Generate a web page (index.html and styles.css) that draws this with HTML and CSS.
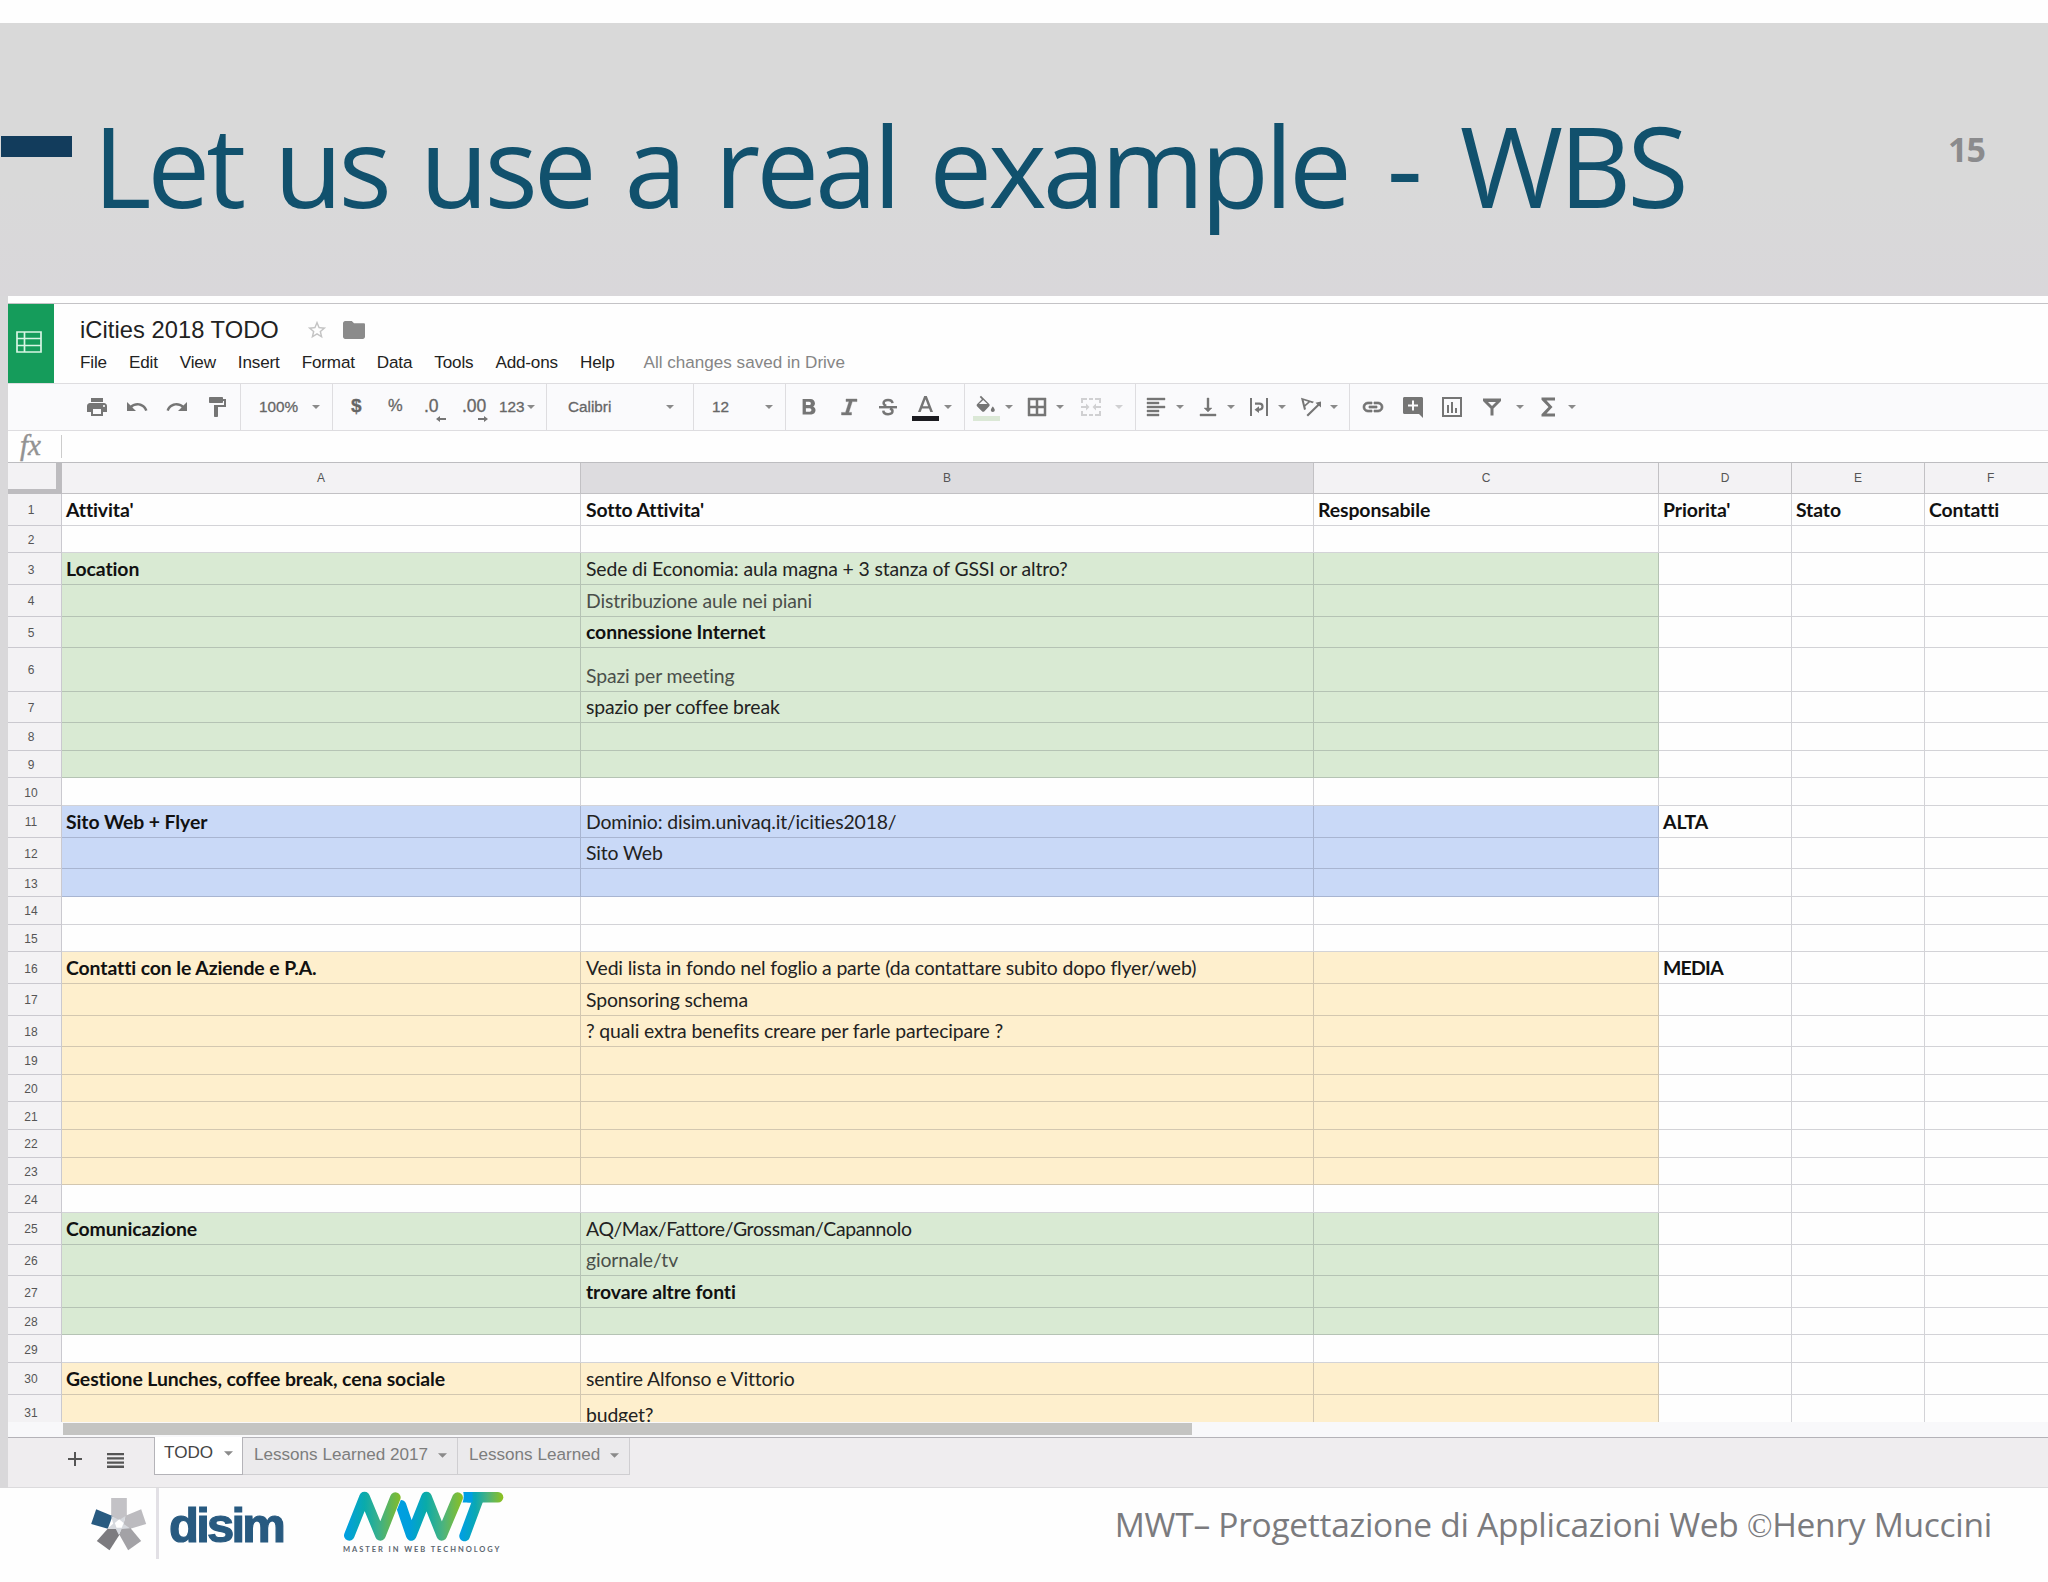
FILE: index.html
```html
<!DOCTYPE html>
<html lang="it">
<head>
<meta charset="utf-8">
<title>Let us use a real example - WBS</title>
<link rel="stylesheet" href="styles.css">
</head>
<body>
<svg width="0" height="0" class="defs">
  <symbol id="arr" viewBox="0 0 8 4"><path d="M0 0h8L4 4z"/></symbol>
</svg>
<main class="slide">
  <header class="head">
    <span class="dash"></span>
    <h1>Let us use a real example <span>-</span> WBS</h1>
    <span class="page">15</span>
  </header>

  <section class="sheet">
    <div class="top">
      <div class="logo"><svg viewBox="0 0 26 22" width="26" height="22"><path d="M1 1h24v20H1zM1 7.5h24M1 14.5h24M8.5 1v20" fill="none" stroke="#d8f5e4" stroke-width="1.7"/></svg></div>
      <div class="titles">
        <div class="name"><span>iCities 2018 TODO</span>
          <svg class="star" viewBox="0 0 24 24" width="22" height="22"><path d="M22 9.24l-7.19-.62L12 2 9.19 8.63 2 9.24l5.46 4.73L5.82 21 12 17.27 18.18 21l-1.63-7.03L22 9.24zM12 15.4l-3.76 2.27 1-4.28-3.32-2.88 4.38-.38L12 6.1l1.71 4.04 4.38.38-3.32 2.88 1 4.28L12 15.4z" fill="#c4c4c4"/></svg>
          <svg viewBox="2 4 20 16" width="22" height="18" preserveAspectRatio="none"><path d="M10 4H4c-1.100 0-2 .9-2 2v12c0 1.100.9 2 2 2h16c1.100 0 2-.9 2-2V7c0-.6-.5-1-1-1h-9l-2-2z" fill="#8b8b8b"/></svg>
        </div>
        <nav class="menu"><span>File</span><span>Edit</span><span>View</span><span>Insert</span><span>Format</span><span>Data</span><span>Tools</span><span>Add-ons</span><span>Help</span><span class="saved">All changes saved in Drive</span></nav>
      </div>
    </div>

    <div class="tools">
      <svg class="ic" viewBox="0 0 24 24"><path d="M19 8H5c-1.660 0-3 1.340-3 3v6h4v4h12v-4h4v-6c0-1.660-1.340-3-3-3zm-3 11H8v-5h8v5zm3-7c-.55 0-1-.45-1-1s.45-1 1-1 1 .45 1 1-.45 1-1 1zm-1-9H6v4h12V3z"/></svg>
      <svg class="ic" viewBox="0 0 24 24"><path d="M12.500 8c-2.650 0-5.050.99-6.900 2.600L2 7v9h9l-3.620-3.620c1.390-1.160 3.160-1.880 5.120-1.880 3.540 0 6.550 2.310 7.600 5.500l2.370-.78C21.080 11.030 17.150 8 12.500 8z"/></svg>
      <svg class="ic" viewBox="0 0 24 24"><path d="M18.400 10.600C16.550 8.990 14.150 8 11.500 8c-4.650 0-8.580 3.030-9.960 7.220L3.900 16c1.050-3.190 4.050-5.500 7.600-5.500 1.950 0 3.730.72 5.120 1.880L13 16h9V7l-3.600 3.600z"/></svg>
      <svg class="ic" viewBox="0 0 24 24"><path d="M18 4V3c0-.55-.45-1-1-1H5c-.55 0-1 .45-1 1v4c0 .55.45 1 1 1h12c.55 0 1-.45 1-1V6h1v4H9v11c0 .55.45 1 1 1h2c.55 0 1-.45 1-1v-9h8V4h-3z"/></svg>
      <b class="sep"></b>
      <span>100%</span><svg class="ar"><use href="#arr"/></svg>
      <b class="sep"></b>
      <span class="big">$</span><span class="pct">%</span>
      <span class="dec">.0<svg viewBox="0 0 10 6" width="10" height="6"><path d="M0 3l4-3v2h6v2H4v2z"/></svg></span>
      <span class="dec">.00<svg viewBox="0 0 10 6" width="10" height="6"><path d="M10 3L6 0v2H0v2h6v2z"/></svg></span>
      <span class="num">123</span><svg class="ar"><use href="#arr"/></svg>
      <b class="sep"></b>
      <span>Calibri</span><svg class="ar"><use href="#arr"/></svg>
      <b class="sep"></b>
      <span>12</span><svg class="ar"><use href="#arr"/></svg>
      <b class="sep"></b>
      <svg class="ic" viewBox="0 0 24 24"><path d="M15.600 11.790c.97-.67 1.650-1.770 1.650-2.790 0-2.260-1.750-4-4-4H6v14h8.040c2.090 0 3.710-1.700 3.710-3.790 0-1.520-.86-2.820-2.150-3.420zM9 7.500h3c.83 0 1.500.67 1.500 1.500s-.67 1.500-1.500 1.500H9v-3zm3.500 9H9v-3h3.500c.83 0 1.500.67 1.500 1.500s-.67 1.500-1.500 1.500z" transform="translate(-1 -1.500) scale(1.100)"/></svg>
      <svg class="ic" viewBox="0 0 24 24"><path d="M9 4v2.600h3L8.500 17.400H4.500V20h10v-2.600h-2.700L15.300 6.600H20V4z" stroke="#757575" stroke-width=".4"/></svg>
      <svg class="ic" viewBox="0 0 24 24"><path d="M16.500 8.200C16.300 6 14.500 4.900 12 4.900c-2.600 0-4.400 1.200-4.400 3.100 0 1.200.8 2.200 2.600 3M14 13.500c1.700.6 2.500 1.400 2.500 2.600 0 1.900-1.900 3.100-4.400 3.100-2.800 0-4.700-1.300-4.800-3.600" fill="none" stroke="#757575" stroke-width="2.500"/><path d="M3 11h18v2.400H3z"/></svg>
      <svg class="fc" viewBox="0 0 27 28"><path d="M12.200 1L6 17h2.700l1.300-3.500h7l1.300 3.500H21L14.800 1zM10.900 11.200l2.600-7 2.600 7z"/><path d="M0 21h27v5H0z" fill="#1b1b20"/></svg><svg class="ar"><use href="#arr"/></svg>
      <b class="sep"></b>
      <svg class="fc" viewBox="0 0 27 28"><path d="M16.200 8.900L8 .8 6.700 2.100l2.200 2.200L4 9.200c-.5.600-.5 1.400 0 2l5.200 5.200c.3.300.7.400 1 .4s.7-.1 1-.4l5-5.200c.600-.6.600-1.600 0-2.300zM6 9L10.200 4.900 14.400 9zM19.800 11.500s-2 2.200-2 3.500c0 1.100.9 2 2 2s2-.9 2-2c0-1.300-2-3.500-2-3.500z"/><path d="M0 21h27v5H0z" fill="#dbe8d6"/></svg><svg class="ar"><use href="#arr"/></svg>
      <svg class="ic" viewBox="0 0 24 24"><path d="M3 3v18h18V3H3zm8 16H5v-6h6v6zm0-8H5V5h6v6zm8 8h-6v-6h6v6zm0-8h-6V5h6v6z" stroke="#757575" stroke-width=".5"/></svg><svg class="ar"><use href="#arr"/></svg>
      <svg class="ic faint" viewBox="0 0 24 24"><path d="M2 3h6v2H4v3H2zM10 3h4v2h-4zM16 3h6v5h-2V5h-4zM2 16h2v3h4v2H2zM10 19h4v2h-4zM20 16h2v5h-6v-2h4zM2 11h5V8.500l3.500 3.500L7 15.500V13H2zM22 11h-5V8.500L13.500 12l3.500 3.500V13h5z"/></svg><svg class="ar faint"><use href="#arr"/></svg>
      <b class="sep"></b>
      <svg class="ic" viewBox="0 0 24 24"><path d="M15 15H3v2h12v-2zm0-8H3v2h12V7zM3 13h18v-2H3v2zm0 8h12v-2H3v2zM3 3v2h18V3H3z" stroke="#757575" stroke-width=".4"/></svg><svg class="ar"><use href="#arr"/></svg>
      <svg class="ic" viewBox="0 0 24 24"><path d="M16 13h-3V3h-2v10H8l4 4 4-4zM4 19v2h16v-2H4z" stroke="#757575" stroke-width=".4"/></svg><svg class="ar"><use href="#arr"/></svg>
      <svg class="ic" viewBox="0 0 24 24"><path d="M3 3h2v18H3zM19 3h2v18h-2zM8 7.500h4.500a4 4 0 0 1 0 8.200H12V18l-4.500-3.300L12 11.300v2.200h.5a1.900 1.900 0 0 0 0-3.800H8z"/></svg><svg class="ar"><use href="#arr"/></svg>
      <svg class="ic" viewBox="0 0 24 24"><path d="M2 2.800l3 12.200 2-.8-.7-2.700 4.700-4.200 2.400 1 1.600-1.500zM4.700 5.300l4.500 1.500-3.400 2.900z" fill-rule="evenodd"/><path d="M7.500 20L18.300 9.400 16.500 7.700 22 6.500v6l-2-1.700L9 21.500z"/></svg><svg class="ar"><use href="#arr"/></svg>
      <b class="sep"></b>
      <svg class="ic" viewBox="0 0 24 24"><path d="M3.900 12c0-1.710 1.390-3.100 3.100-3.100h4V7H7c-2.760 0-5 2.240-5 5s2.240 5 5 5h4v-1.900H7c-1.710 0-3.100-1.390-3.100-3.100zM8 13h8v-2H8v2zm9-6h-4v1.900h4c1.710 0 3.100 1.390 3.100 3.100s-1.390 3.100-3.100 3.100h-4V17h4c2.760 0 5-2.240 5-5s-2.240-5-5-5z" stroke="#757575" stroke-width=".7"/></svg>
      <svg class="ic" viewBox="0 0 24 24"><path d="M22 3.500c0-.9-.6-1.500-1.500-1.500h-17C2.600 2 2 2.600 2 3.500v14c0 .9.600 1.500 1.500 1.500H18l4 4zM17 11.500h-4v4h-2v-4H7v-2h4v-4h2v4h4z"/></svg>
      <svg class="ic" viewBox="0 0 24 24"><path d="M2 2v20h20V2zm18 18H4V4h16zM7 10h2v8H7zM11 7h2v11h-2zM15 13h2v5h-2z"/></svg>
      <svg class="ic" viewBox="0 0 24 24"><path d="M3 3.500h18v2.500l-7.500 7.500v7h-3v-7L3 6zM8 7l4 4 4-4z" fill-rule="evenodd"/></svg><svg class="ar"><use href="#arr"/></svg>
      <svg class="ic" viewBox="0 0 24 24"><path d="M19 2.500H5.500v2.300l7 7.200-7 7.200v2.300H19v-3h-8.500l6-6.500-6-6.500H19z"/></svg><svg class="ar"><use href="#arr"/></svg>
    </div>

    <div class="formula"><i>fx</i><span></span></div>

    <div class="grid">
      <div class="row cols"><b class="corner"></b><span>A</span><span class="sel">B</span><span>C</span><span>D</span><span>E</span><span>F</span></div>
      <div class="row strong"><b>1</b><span>Attivita'</span><span>Sotto Attivita'</span><span>Responsabile</span><span>Priorita'</span><span>Stato</span><span>Contatti</span></div>
      <div class="row low"><b>2</b><span></span><span></span><span></span><span></span><span></span><span></span></div>
      <div class="row green"><b>3</b><span class="bd">Location</span><span>Sede di Economia: aula magna + 3 stanza of GSSI or altro?</span><span></span><span></span><span></span><span></span></div>
      <div class="row green"><b>4</b><span></span><span class="soft">Distribuzione aule nei piani</span><span></span><span></span><span></span><span></span></div>
      <div class="row green"><b>5</b><span></span><span class="bd">connessione Internet</span><span></span><span></span><span></span><span></span></div>
      <div class="row green high"><b>6</b><span></span><span class="soft">Spazi per meeting</span><span></span><span></span><span></span><span></span></div>
      <div class="row green"><b>7</b><span></span><span>spazio per coffee break</span><span></span><span></span><span></span><span></span></div>
      <div class="row green low"><b>8</b><span></span><span></span><span></span><span></span><span></span><span></span></div>
      <div class="row green low"><b>9</b><span></span><span></span><span></span><span></span><span></span><span></span></div>
      <div class="row low"><b>10</b><span></span><span></span><span></span><span></span><span></span><span></span></div>
      <div class="row blue"><b>11</b><span class="bd">Sito Web + Flyer</span><span>Dominio: disim.univaq.it/icities2018/</span><span></span><span class="bd">ALTA</span><span></span><span></span></div>
      <div class="row blue"><b>12</b><span></span><span>Sito Web</span><span></span><span></span><span></span><span></span></div>
      <div class="row blue low"><b>13</b><span></span><span></span><span></span><span></span><span></span><span></span></div>
      <div class="row low"><b>14</b><span></span><span></span><span></span><span></span><span></span><span></span></div>
      <div class="row low"><b>15</b><span></span><span></span><span></span><span></span><span></span><span></span></div>
      <div class="row sand"><b>16</b><span class="bd">Contatti con le Aziende e P.A.</span><span>Vedi lista in fondo nel foglio a parte (da contattare subito dopo flyer/web)</span><span></span><span class="bd caps">MEDIA</span><span></span><span></span></div>
      <div class="row sand"><b>17</b><span></span><span>Sponsoring schema</span><span></span><span></span><span></span><span></span></div>
      <div class="row sand"><b>18</b><span></span><span>? quali extra benefits creare per farle partecipare ?</span><span></span><span></span><span></span><span></span></div>
      <div class="row sand low"><b>19</b><span></span><span></span><span></span><span></span><span></span><span></span></div>
      <div class="row sand low"><b>20</b><span></span><span></span><span></span><span></span><span></span><span></span></div>
      <div class="row sand low"><b>21</b><span></span><span></span><span></span><span></span><span></span><span></span></div>
      <div class="row sand low"><b>22</b><span></span><span></span><span></span><span></span><span></span><span></span></div>
      <div class="row sand low"><b>23</b><span></span><span></span><span></span><span></span><span></span><span></span></div>
      <div class="row low"><b>24</b><span></span><span></span><span></span><span></span><span></span><span></span></div>
      <div class="row green"><b>25</b><span class="bd">Comunicazione</span><span class="tight">AQ/Max/Fattore/Grossman/Capannolo</span><span></span><span></span><span></span><span></span></div>
      <div class="row green"><b>26</b><span></span><span class="soft">giornale/tv</span><span></span><span></span><span></span><span></span></div>
      <div class="row green"><b>27</b><span></span><span class="bd">trovare altre fonti</span><span></span><span></span><span></span><span></span></div>
      <div class="row green low"><b>28</b><span></span><span></span><span></span><span></span><span></span><span></span></div>
      <div class="row low"><b>29</b><span></span><span></span><span></span><span></span><span></span><span></span></div>
      <div class="row sand"><b>30</b><span class="bd">Gestione Lunches, coffee break, cena sociale</span><span>sentire Alfonso e Vittorio</span><span></span><span></span><span></span><span></span></div>
      <div class="row sand last"><b>31</b><span></span><span>budget?</span><span></span><span></span><span></span><span></span></div>
    </div>

    <div class="scroll"><span></span></div>

    <div class="tabs">
      <svg class="plus" viewBox="0 0 14 14" width="14" height="14"><path d="M6 0h2v6h6v2H8v6H6V8H0V6h6z" fill="#555"/></svg>
      <svg class="list" viewBox="0 0 17 15" width="17" height="15"><path d="M0 0h17v2.300H0zM0 4.200h17v2.300H0zM0 8.400h17v2.300H0zM0 12.600h17v2.300H0z" fill="#555"/></svg>
      <span class="tab on">TODO<svg class="ar"><use href="#arr"/></svg></span>
      <span class="tab">Lessons Learned 2017<svg class="ar"><use href="#arr"/></svg></span>
      <span class="tab">Lessons Learned<svg class="ar"><use href="#arr"/></svg></span>
    </div>
  </section>

  <footer class="foot">
    <svg class="flower" viewBox="90 50 170 162" width="57" height="54">
      <path d="M153 53h47v54l-23 16-24-16z" fill="#c3c2c6"/>
      <path d="M243 87l15 44-50 15-18-14 6-26z" fill="#bcbbbf"/>
      <path d="M243 182l-39 28-27-48 9-22 24 2z" fill="#a3a2a6"/>
      <path d="M148 210l-38-28 34-38 24-1 10 20z" fill="#7c7b7f"/>
      <path d="M108 87l-15 44 50 14 14-38z" fill="#285a80"/>
      <path d="M153 107l24 12 19-12-6 24 20 13-26 2-8 18-9-18-26 0 18-16z" fill="#d6d9de"/>
      <path d="M177 117l13 11-5 14h-16l-5-14z" fill="#fff"/>
    </svg>
    <span class="rule"></span>
    <span class="disim">disim</span>
    <div class="mwt">
      <svg viewBox="850 34 484 154" width="161" height="51">
        <defs>
          <linearGradient id="g1" gradientUnits="userSpaceOnUse" x1="855" y1="0" x2="1025" y2="0"><stop offset="0" stop-color="#009fe3"/><stop offset=".35" stop-color="#0aabab"/><stop offset=".6" stop-color="#3bb08a"/><stop offset="1" stop-color="#86bc25"/></linearGradient>
          <linearGradient id="g2" gradientUnits="userSpaceOnUse" x1="1010" y1="0" x2="1210" y2="0"><stop offset="0" stop-color="#009fe3"/><stop offset=".2" stop-color="#009fdb"/><stop offset=".45" stop-color="#0aaba8"/><stop offset=".7" stop-color="#4ab380"/><stop offset="1" stop-color="#8cc021"/></linearGradient>
          <linearGradient id="g3" gradientUnits="userSpaceOnUse" x1="1205" y1="0" x2="1330" y2="0"><stop offset="0" stop-color="#009fe3"/><stop offset=".35" stop-color="#0aa8b4"/><stop offset=".65" stop-color="#4cb27c"/><stop offset="1" stop-color="#8cc021"/></linearGradient>
        </defs>
        <g fill="none" stroke-width="32" stroke-linecap="round" stroke-linejoin="round">
          <path d="M1216 170l43-116" stroke="url(#g3)"/>
          <path d="M1230 53h87" stroke="url(#g3)"/>
          <path d="M1212 37h28v32h-30q6-18 2-32z" fill="#009fe3" stroke="none"/>
          <path d="M1024 77l31 91 46-116 46 116 48-114" stroke="url(#g2)"/>
          <path d="M868 168l46-116 48 116 45-114" stroke="#fff" stroke-width="36"/>
          <path d="M868 168l46-116 48 116 45-114" stroke="url(#g1)"/>
        </g>
      </svg>
      <span>MASTER IN WEB TECHNOLOGY</span>
    </div>
    <p class="credit">MWT– Progettazione di Applicazioni Web <span>©</span>Henry Muccini</p>
  </footer>
</main>
</body>
</html>
```
FILE: styles.css
```css
* { box-sizing: border-box; }
body { margin: 0; background: #fff; font-family: "Liberation Sans", Arial, sans-serif; }
.defs { position: absolute; }
.slide { width: 2048px; height: 1582px; padding-top: 23px; overflow: hidden; display: flex; flex-direction: column; background: #fefefe; }

/* title band */
.head { height: 273px; flex: none; display: flex; align-items: flex-start; background: linear-gradient(#d9d9d9 60%, #d9d7da); }
.dash { width: 71px; height: 21px; margin: 113px 0 0 1px; background: #123c5c; }
h1 { margin: 65px 0 0 21px; font: 400 112px/153px "Open Sans", "Noto Sans", sans-serif; color: #11516d; white-space: nowrap; letter-spacing: -4.100px; word-spacing: 7px; }
h1 span { margin: 0 9px 0 7px; }
.page { margin: 103px 63px 0 auto; font: 700 34px/46px "Open Sans", sans-serif; color: #8b8b8d; letter-spacing: -1px; }

/* spreadsheet window */
.sheet { flex: none; height: 1192px; border-left: 8px solid #d9d8da; padding-top: 7px; background: #fefefe; display: flex; flex-direction: column; }
.top { height: 80px; flex: none; display: flex; border-top: 1px solid #c4c3c6; }
.logo { width: 46px; padding: 27px 0 0 8px; background: #159c5b; }
.titles { padding: 11px 0 0 26px; }
.name { display: flex; align-items: center; height: 30px; font-size: 23.700px; color: #222; }
.name span { width: 226px; white-space: nowrap; letter-spacing: .05px; }
.star { margin-right: 15px; }
.menu { display: flex; gap: 22px; margin-top: 6px; font-size: 17.100px; line-height: 24px; color: #222; white-space: nowrap; letter-spacing: -.16px; }
.saved { margin-left: 7px; color: #858585; letter-spacing: 0; }

.tools { height: 48px; flex: none; border: solid #dedde0; border-width: 1px 0; background: #fafafc; display: grid; align-items: center; justify-items: start; padding-left: 77px; fill: #757575;
  grid-template-columns:
    40px 40px 40px 35px 19px 53px 20px 19px 37px 36px 38px 37px 28px 19px 22px
    98px 27px 19px 53px 20px 12px 40px 39px 36px 32px 20px 9px 32px 20px 31px
    23px 36px 20px 9px 32px 20px 31px 20px 31px 21px 31px 19px 12px 40px
    39px 40px 36px 20px 32px 8px; }
.tools > span { font-size: 15.300px; color: #666; -webkit-text-stroke: .3px #666; white-space: nowrap; }
.tools .big { font-size: 19px; font-weight: 700; margin-top: -2px; }
.tools .pct { font-size: 16.500px; margin-top: -3px; }
.tools .dec { position: relative; font-size: 17.500px; margin-top: -2px; }
.dec svg { position: absolute; right: -7px; bottom: -5px; }
.tools .dec:nth-child(12) svg { right: -2px; }
.ic { width: 24px; height: 24px; }
.fc { width: 27px; height: 28px; margin-top: 3px; }
.ar { width: 8px; height: 4px; fill: #8a8a8a; }
.faint { fill: #d0d0d2; }
.sep { width: 1px; height: 46px; background: #dedde0; }

.formula { height: 31px; flex: none; display: flex; align-items: center; }
.formula i { width: 53px; padding: 0 0 4px 12px; font: italic 29px/26px "Liberation Serif", serif; color: #929292; -webkit-text-stroke: .4px #929292; }
.formula span { width: 1px; height: 23px; background: #ccc; }

/* cells */
.grid { height: 960px; flex: none; overflow: hidden; }
.row { height: 31.630px; display: grid; grid-template-columns: 54px 519px 733px 345px 133px 133px 1fr; font: 19.400px/24px Lato, sans-serif; color: #222; }
.row.low { height: 27.650px; }
.row.high { height: 43.400px; }
.row.last { height: 36px; }
.row > * { border: solid rgba(40, 40, 60, .2); border-width: 0 1px 1px 0; }
.row > b { display: flex; align-items: center; justify-content: center; padding: 2px 7px 0 0; background: #f3f2f4; font: 12px "Liberation Sans", sans-serif; color: #555; }
.row > span { display: flex; align-items: flex-end; padding: 0 0 3px 4px; white-space: nowrap; letter-spacing: -.14px; }
.row > :nth-child(3) { padding-left: 5px; }
.row > :last-child { border-right: 0; }
.row > .bd, .strong > span { font-weight: 700; color: #111; letter-spacing: -.09px; }
.row > .caps { letter-spacing: -.7px; }
.row > .tight { letter-spacing: -.34px; }
.row > .soft { color: #4a4f4a; }
.green > :nth-child(n+2):nth-child(-n+4) { background: #d9ead3; }
.blue > :nth-child(n+2):nth-child(-n+4) { background: #c9d9f7; }
.sand > :nth-child(n+2):nth-child(-n+4) { background: #feefcd; }
.row.cols { height: 32px; font: 12px "Liberation Sans", sans-serif; border-top: 1px solid #bdbdc0; }
.row.cols > span { align-items: center; justify-content: center; padding: 0; background: #f3f2f4; color: #555; border-color: #c2c1c4; }
.row.cols > :last-child { padding-left: 8px; }
.row.cols > .sel { background: #dddcdf; }
.row > .corner { border: solid #bdbcbf; border-width: 0 6px 5px 0; }

.scroll { height: 16px; flex: none; padding: 1px 0 0 55px; background: #f8f8fa; border-bottom: 1px solid #b4b3b8; }
.scroll span { display: block; width: 1129px; height: 12px; background: #c4c4c2; }
.tabs { flex: 1; display: flex; align-items: flex-start; background: #efedef; border-bottom: 1px solid #dcdbdd; }
.plus { margin: 14px 0 0 60px; }
.list { margin: 15px 30px 0 25px; }
.tab { display: flex; align-items: center; justify-content: space-between; width: 215px; height: 37px; padding: 0 10px 2px 11px; border: solid #cfced1; border-width: 0 1px 1px 0; background: #ebeaec; color: #7d7d7d; font-size: 17.100px; white-space: nowrap; }
.tab .ar { width: 9px; height: 5px; }
.tab:last-child { width: 172px; }
.tab.on { width: 89px; height: 38px; margin-top: -1px; padding: 0 9px 5px 9px; border-left-width: 1px; background: #fff; color: #444; border-color: #b4b3b8; }

/* footer */
.foot { flex: 1; display: flex; align-items: flex-start; }
.flower { margin: 9px 0 0 90px; }
.rule { width: 3px; height: 71px; margin-left: 9px; background: #e2e0e5; }
.disim { width: 180px; margin: 9px 0 0 10px; font: 700 49px/56px "Liberation Sans", sans-serif; color: #285a80; letter-spacing: -2.800px; -webkit-text-stroke: 1.200px #285a80; }
.mwt { display: flex; flex-direction: column; width: 170px; margin: 3px 0 0 -6px; }
.mwt span { margin-top: 3px; font: 700 7.500px/10px Lato, sans-serif; color: #5c6670; letter-spacing: 1.950px; white-space: nowrap; }
.credit { margin: 13px 56px 0 auto; font: 33.500px/46px "Open Sans", sans-serif; color: #7b7b7e; white-space: nowrap; letter-spacing: -.28px; }
.credit span { font-family: "Liberation Serif", serif; }
```
